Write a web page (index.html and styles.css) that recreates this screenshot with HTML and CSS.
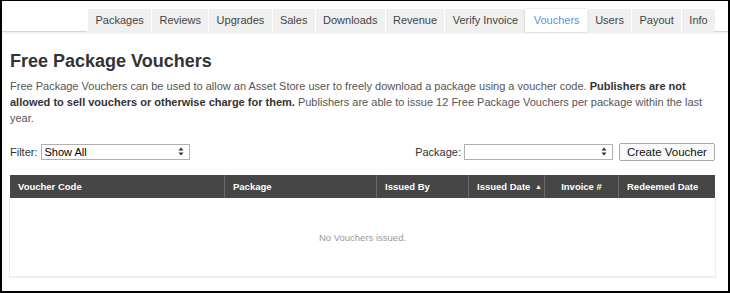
FILE: index.html
```html
<!DOCTYPE html>
<html lang="en">
<head>
  <meta charset="UTF-8" />
  <title>Free Package Vouchers</title>
  <link rel="stylesheet" href="styles.css">
</head>
<body>
  <div class="frame">
    <!-- Onglets publisher -->
    <nav class="tabs">
      <ul>
        <li><a href="#">Packages</a></li>
        <li><a href="#">Reviews</a></li>
        <li><a href="#">Upgrades</a></li>
        <li><a href="#">Sales</a></li>
        <li><a href="#">Downloads</a></li>
        <li><a href="#">Revenue</a></li>
        <li><a href="#">Verify Invoice</a></li>
        <li class="active"><a href="#">Vouchers</a></li>
        <li><a href="#">Users</a></li>
        <li><a href="#">Payout</a></li>
        <li><a href="#">Info</a></li>
      </ul>
    </nav>

    <div class="content">
      <h1>Free Package Vouchers</h1>
      <p class="intro">
        Free Package Vouchers can be used to allow an Asset Store user to freely download a package using a voucher code.
        <strong>Publishers are not allowed to sell vouchers or otherwise charge for them.</strong>
        Publishers are able to issue 12 Free Package Vouchers per package within the last year.
      </p>

      <div class="toolbar">
        <label class="field">
          Filter:
          <span class="select select-filter">Show All
            <svg class="arrows" width="6" height="9" viewBox="0 0 6 9"><path d="M3 0.5 L5.5 3.5 H0.5 Z M3 8.5 L5.5 5.5 H0.5 Z" fill="#333"/></svg>
          </span>
        </label>
        <div class="field right">
          Package:
          <span class="select select-package">
            <svg class="arrows" width="6" height="9" viewBox="0 0 6 9"><path d="M3 0.5 L5.5 3.5 H0.5 Z M3 8.5 L5.5 5.5 H0.5 Z" fill="#333"/></svg>
          </span>
          <button>Create Voucher</button>
        </div>
      </div>

      <div class="table">
        <div class="thead">
          <div class="th">Voucher Code</div>
          <div class="th">Package</div>
          <div class="th">Issued By</div>
          <div class="th">Issued Date <span class="sort">&#9650;</span></div>
          <div class="th center">Invoice #</div>
          <div class="th">Redeemed Date</div>
        </div>
        <div class="tbody">
          <span class="empty">No Vouchers issued.</span>
        </div>
      </div>
    </div>
  </div>
</body>
</html>
```

FILE: styles.css
```css
html, body {
  margin: 0;
  padding: 0;
  background: #fff;
  font-family: "Liberation Sans", Arial, sans-serif;
  color: #333;
}

.frame {
  box-sizing: border-box;
  width: 730px;
  height: 293px;
  border: 2px solid #000;
  border-top-width: 1px;
  overflow: hidden;
}

/* Onglets */
.tabs {
  padding-top: 8px;
  border-bottom: 1px solid #d6d6d6;
  box-shadow: 0 1px 2px rgba(0,0,0,0.08);
}
.tabs ul {
  list-style: none;
  display: flex;
  justify-content: flex-end;
  margin: 0;
  padding: 0 13px 0 0;
}
.tabs li {
  background: #f0f0f0;
  border-left: 1px solid #fff;
  margin-bottom: -1px;
}
.tabs a {
  display: block;
  height: 22px;
  line-height: 22px;
  padding: 0 7.3px;
  font-size: 11px;
  color: #444;
  text-decoration: none;
}
.tabs li.active {
  background: #fff;
  box-shadow: 0 0 2px rgba(0,0,0,0.2);
  position: relative;
}
.tabs li.active a {
  color: #5f93d3;
  height: 23px;
}

.content {
  padding: 0 13px 0 8px;
}

h1 {
  margin: 19px 0 6px;
  font-size: 18px;
  line-height: 21px;
  font-weight: bold;
  color: #333;
}

.intro {
  margin: 0;
  font-size: 11px;
  line-height: 16px;
  color: #555;
}
.intro strong {
  color: #333;
}

.toolbar {
  display: flex;
  justify-content: space-between;
  align-items: center;
  margin-top: 17px;
  height: 18px;
}
.field {
  display: flex;
  align-items: center;
  gap: 3px;
  font-size: 11px;
  color: #333;
}

.select {
  position: relative;
  box-sizing: border-box;
  height: 16px;
  line-height: 14px;
  border: 1px solid #b0b0b0;
  background: #fff;
  font-size: 11px;
  color: #000;
  padding-left: 3px;
}
.select-filter {
  width: 149px;
}
.select-package {
  width: 149px;
}
.select .arrows {
  position: absolute;
  right: 5px;
  top: 2px;
}

button {
  margin-left: 3px;
  box-sizing: border-box;
  height: 18px;
  width: 96px;
  padding: 0;
  border: 1px solid #a8a8a8;
  border-radius: 2px;
  background: #fafafa;
  font-family: "Liberation Sans", Arial, sans-serif;
  font-size: 11.5px;
  color: #111;
}

.table {
  margin-top: 14px;
}
.thead {
  display: grid;
  grid-template-columns: 214px 152px 92px 76px 74px 97px;
  background: #464646;
  height: 23px;
}
.th {
  line-height: 23px;
  padding-left: 8px;
  font-size: 9.5px;
  font-weight: bold;
  color: #fff;
  border-left: 1px solid #6a6a6a;
}
.th:first-child {
  border-left: none;
}
.th.center {
  text-align: center;
  padding-left: 0;
}
.sort {
  font-size: 7px;
  vertical-align: 1px;
  margin-left: 2px;
}

.tbody {
  height: 78px;
  margin: 0 -1px;
  border: 1px solid #ececec;
  border-top: none;
  box-shadow: 0 1px 1px rgba(0,0,0,0.05);
  display: flex;
  align-items: center;
  justify-content: center;
}
.empty {
  font-size: 9.5px;
  color: #999;
}
```
